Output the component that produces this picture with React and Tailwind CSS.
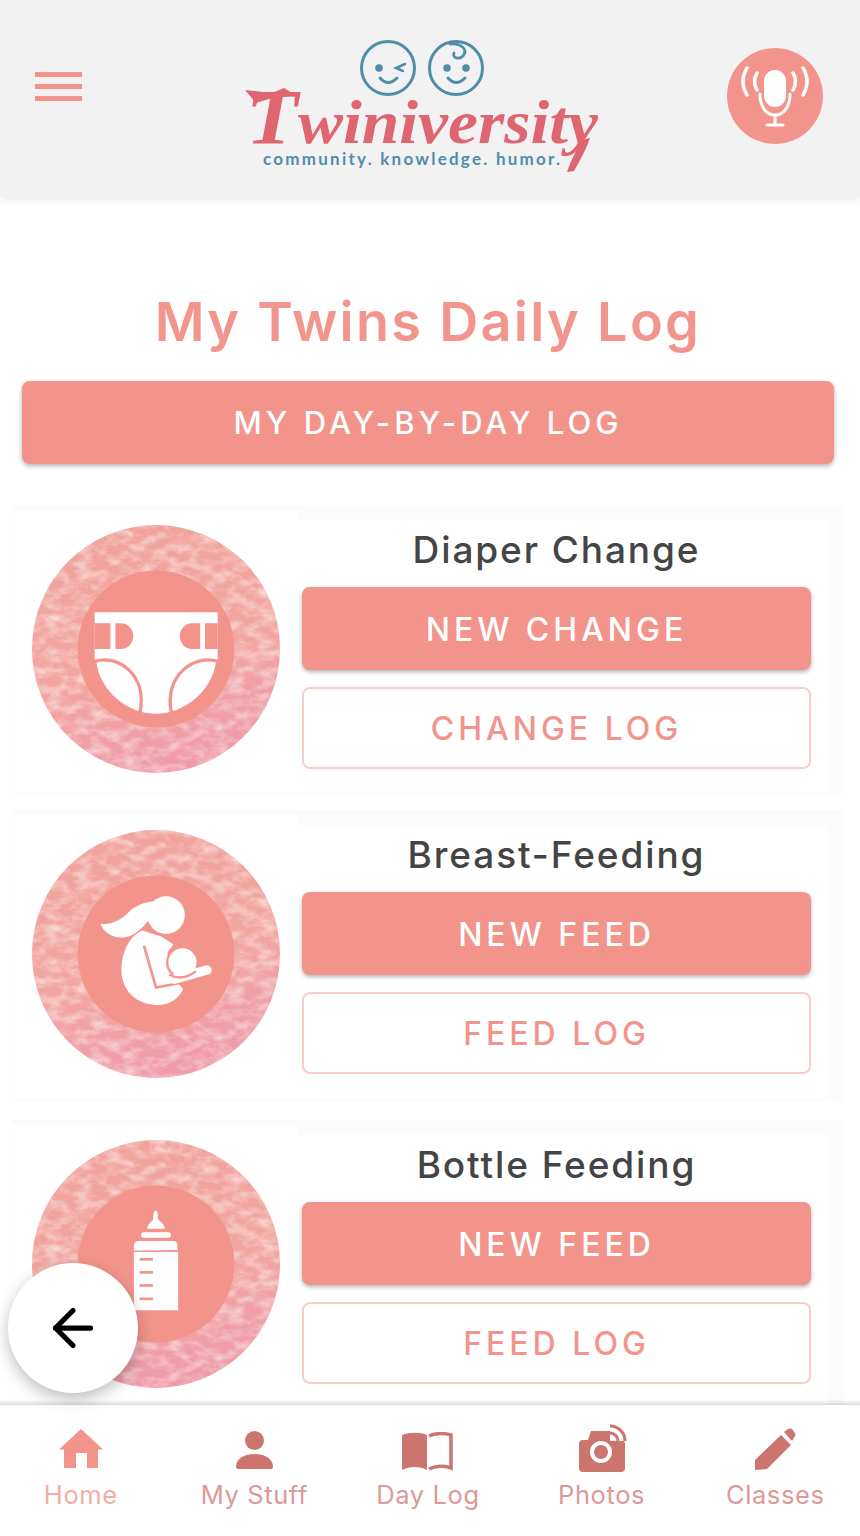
import React from "react";
import { ArrowLeft } from "lucide-react";

const SALMON = "#f2948c";

// watercolour disc with the salmon badge on top, child drawn in zoomed coords (740 wide)
const Badge = ({ id, top, children }) => (
  <svg width="248" height="248" viewBox={`96 ${top} 740 740`} className="block">
    <defs>
      <linearGradient id={`wash-${id}`} x1="0.3" y1="0" x2="0.6" y2="1">
        <stop offset="0" stopColor="#f0a29c" />
        <stop offset="0.55" stopColor="#f2a6a0" />
        <stop offset="1" stopColor="#ee9aa9" />
      </linearGradient>
      <filter id={`noise-${id}`} x="0" y="0" width="100%" height="100%">
        <feTurbulence type="fractalNoise" baseFrequency="0.022 0.038" numOctaves="6" seed="7" />
        <feColorMatrix values="0 0 0 0 1  0 0 0 0 0.93  0 0 0 0 0.92  1.2 0 0 0 -0.46" />
      </filter>
      <clipPath id={`disc-${id}`}>
        <circle cx="466" cy={top + 370} r="370" />
      </clipPath>
    </defs>
    <circle cx="466" cy={top + 370} r="370" fill={`url(#wash-${id})`} />
    <g clipPath={`url(#disc-${id})`}>
      <rect x="96" y={top} width="740" height="740" filter={`url(#noise-${id})`} />
    </g>
    <circle cx="466" cy={top + 370} r="234" fill={SALMON} />
    {children}
  </svg>
);

const DiaperIcon = () => (
  <g>
    <path d="M283 335H650V475L645 485C632 570 552 638 466 638C380 638 300 570 288 485L283 475Z" fill="#fff" />
    <path d="M283 368H330V445H283Z" fill={SALMON} />
    <path d="M345 368H362A36 38.500 0 0 1 362 445H345Z" fill={SALMON} />
    <path d="M612 368H650V445H612Z" fill={SALMON} />
    <path d="M598 368H573A36 38.500 0 0 0 573 445H598Z" fill={SALMON} />
    <path d="M284 482C350 460 442 520 418 636" fill="none" stroke={SALMON} strokeWidth="10" />
    <path d="M649 482C585 460 488 520 512 636" fill="none" stroke={SALMON} strokeWidth="10" />
  </g>
);

const MotherIcon = () => (
  <g>
    <circle cx="496" cy="314" r="56" fill="#fff" />
    <path d="M465 272C425 276 402 288 385 305C365 325 335 346 300 340C310 366 340 386 375 380C405 375 430 350 448 322Z" fill="#fff" />
    <path d="M425 360L482 378L518 402L500 425L510 490L547 535C532 566 505 582 470 582C410 582 363 540 363 480C363 425 385 378 425 360Z" fill="#fff" />
    <path d="M430 405L466 530L640 497" fill="none" stroke={SALMON} strokeWidth="8" />
    <circle cx="545" cy="455" r="49" fill={SALMON} />
    <path d="M520 505L618 478" stroke="#fff" strokeWidth="28" strokeLinecap="round" />
    <circle cx="545" cy="455" r="42" fill="#fff" />
    <path d="M505 492Q545 512 585 482" fill="none" stroke={SALMON} strokeWidth="7" />
  </g>
);

const BottleIcon = () => (
  <g fill="#fff">
    <path d="M458 265C458 250 460 240 465 240C470 240 472 250 472 265C478 275 492 280 492 295H440C440 280 454 275 458 265Z" />
    <rect x="422" y="305" width="88" height="17" rx="6" />
    <path d="M400 360V345Q400 331 414 331H518Q530 331 530 345V358Z" />
    <rect x="400" y="364" width="132" height="174" />
    <g fill={SALMON}>
      <rect x="417" y="382" width="40" height="8" />
      <rect x="417" y="421" width="40" height="8" />
      <rect x="417" y="460" width="40" height="8" />
      <rect x="417" y="500" width="40" height="8" />
    </g>
  </g>
);

const TwiniversityLogo = () => (
  <svg width="380" height="150" viewBox="230 30 380 150" className="block overflow-visible">
    <g fill="none" stroke="#4f8ea8" strokeWidth="3" strokeLinecap="round">
      <circle cx="388" cy="68" r="26.500" />
      <path d="M380 78Q388 87 397 78" />
      <path d="M405 64L396 68L403 71" strokeWidth="2.500" />
      <circle cx="456" cy="68" r="26.500" />
      <path d="M448 78Q456 87 465 78" />
      <path d="M450 44C462 43 468 50 463 56C459 60 452 58 454 53" strokeWidth="2.800" />
    </g>
    <circle cx="379" cy="68" r="3.800" fill="#4f8ea8" />
    <circle cx="447" cy="68" r="3.800" fill="#4f8ea8" />
    <circle cx="466" cy="68" r="3.800" fill="#4f8ea8" />
    <path d="M245 90L272 93L284 88L297 96L272 98L256 103Z" fill="#df6570" />
    <path d="M581 140C576 152 571 160 567 172L574 171C580 160 586 150 590 138Z" fill="#df6570" />
    <text
      x="246"
      y="143"
      textLength="352"
      lengthAdjust="spacingAndGlyphs"
      fill="#df6570"
      fontSize="62"
      fontStyle="italic"
      fontWeight="700"
      fontFamily="'Liberation Serif', serif"
    >
      <tspan fontSize="78">T</tspan>winiversity
    </text>
    <text
      x="263"
      y="165"
      textLength="297"
      fill="#4f8ea8"
      fontSize="17"
      fontWeight="700"
      fontFamily="Lato, sans-serif"
    >
      community. knowledge. humor.
    </text>
  </svg>
);

const MicIcon = () => (
  <svg width="96" height="96" viewBox="0 0 96 96" className="block">
    <circle cx="48" cy="48" r="48" fill={SALMON} />
    <rect x="37" y="22" width="22" height="37" rx="11" fill="#fff" />
    <g fill="none" stroke="#fff" strokeWidth="3" strokeLinecap="round">
      <path d="M33 46C33 60 40 67 48 67C56 67 63 60 63 46" />
      <path d="M48 67V77M40 77H56" />
      <path d="M20 20Q12 33 20 47M30 25Q25 33 30 42M76 20Q84 33 76 47M66 25Q71 33 66 42" strokeWidth="3.500" />
    </g>
  </svg>
);

const HomeIcon = () => (
  <svg width="44" height="40" viewBox="0 0 44 40" className="block">
    <path d="M22 0L44 20.500H39V39H28V24H17V39H5V20.500H0Z" fill="#f2948c" />
  </svg>
);

const PersonIcon = () => (
  <svg width="37" height="38" viewBox="0 0 37 38" className="block">
    <circle cx="18.500" cy="9.500" r="9.500" fill="#cc746e" />
    <path d="M0 36C0 27 9 23 18.500 23C28 23 37 27 37 36Q37 38 35 38H2Q0 38 0 36Z" fill="#cc746e" />
  </svg>
);

const BookIcon = () => (
  <svg width="51" height="39" viewBox="0 0 51 39" className="block">
    <path d="M0 3C8 0 18 0 25 3V38C18 34 8 34 0 38Z" fill="#cc746e" />
    <path d="M27 4C33 1 43 1 49 3V36C43 33 33 34 27 37" fill="none" stroke="#cc746e" strokeWidth="3.500" />
  </svg>
);

const CameraIcon = () => (
  <svg width="46" height="47" viewBox="0 0 46 47" className="block overflow-visible">
    <path d="M4 15H9L12 6H34V15H42Q46 15 46 19V43Q46 47 42 47H4Q0 47 0 43V19Q0 15 4 15Z" fill="#cc746e" />
    <path d="M31 16L31 -3A19 19 0 0 1 50 16Z" fill="#fff" />
    <g fill="none" stroke="#cc746e" strokeWidth="3">
      <path d="M31 8A8 8 0 0 1 39 16M31 1A15 15 0 0 1 46 16" />
    </g>
    <circle cx="22" cy="27" r="9" fill="#cc746e" stroke="#fff" strokeWidth="4" />
  </svg>
);

const PencilIcon = () => (
  <svg width="41" height="43" viewBox="0 0 41 43" className="block">
    <path d="M0 32L26 7L36 17L12 41L0 42Z" fill="#cc746e" />
    <path d="M29 4L33 1Q35 0 37 1L40 5Q41 7 40 8L37 13Z" fill="#cc746e" />
  </svg>
);

const cards = [
  { id: "diaper", title: "Diaper Change", primary: "NEW CHANGE", secondary: "CHANGE LOG", top: 75, icon: <DiaperIcon />, className: "mt-[41px] h-[287px]" },
  { id: "breast", title: "Breast-Feeding", primary: "NEW FEED", secondary: "FEED LOG", top: 60, icon: <MotherIcon />, className: "mt-[18px] h-[288px]" },
  { id: "bottle", title: "Bottle Feeding", primary: "NEW FEED", secondary: "FEED LOG", top: 30, icon: <BottleIcon />, className: "mt-[22px] h-[288px]" },
];

const navItems = [
  { label: "Home", icon: <HomeIcon />, className: "text-[#f4aca6]", iconClass: "" },
  { label: "My Stuff", icon: <PersonIcon />, className: "text-[#dc9a96]", iconClass: "" },
  { label: "Day Log", icon: <BookIcon />, className: "text-[#dc9a96]", iconClass: "translate-y-[2px]" },
  { label: "Photos", icon: <CameraIcon />, className: "text-[#dc9a96]", iconClass: "translate-y-[3px]" },
  { label: "Classes", icon: <PencilIcon />, className: "text-[#dc9a96]", iconClass: "translate-y-[2px]" },
];

const LogCard = ({ card }) => (
  <section className={`ml-[12px] flex w-[831px] shrink-0 bg-[#fbfbfb] shadow-[0_3px_5px_rgba(0,0,0,0.02)] ${card.className}`}>
    <div className="mt-[5px] w-[286px] bg-white pl-[20px] pt-[15px]">
      <Badge id={card.id} top={card.top}>
        {card.icon}
      </Badge>
    </div>
    <div className="mt-[15px] w-[530px] bg-white pl-[4px]">
      <h2 className="flex h-[60px] w-[509px] items-center justify-center text-[37px] font-medium tracking-[1.9px] text-[#444444]">
        {card.title}
      </h2>
      <button className="mt-[7px] flex h-[83px] w-[509px] items-center justify-center rounded-lg bg-[#f2948c] pt-[2px] text-[32px] font-medium tracking-[4px] text-white shadow-[0_2px_4px_rgba(0,0,0,0.3)]">
        {card.primary}
      </button>
      <button className="mt-[17px] flex h-[82px] w-[509px] items-center justify-center rounded-lg border-2 border-[#f8cdc9] bg-white pt-[2px] text-[32px] font-medium tracking-[4px] text-[#f2948c]">
        {card.secondary}
      </button>
    </div>
  </section>
);

const App = () => {
  return (
    <div className="relative flex h-screen w-full flex-col overflow-hidden bg-white font-['Inter',sans-serif]">
      <header className="z-10 flex h-[197px] shrink-0 items-start bg-[#f2f2f3] shadow-[0_3px_8px_rgba(0,0,0,0.08)]">
        <div className="ml-[35px] mt-[72px] flex w-[47px] flex-col gap-[7px]">
          <span className="h-[5px] bg-[#f2948c]"></span>
          <span className="h-[5px] bg-[#f2948c]"></span>
          <span className="h-[5px] bg-[#f2948c]"></span>
        </div>
        <div className="ml-[148px] mt-[30px]">
          <TwiniversityLogo />
        </div>
        <div className="ml-[117px] mt-[48px]">
          <MicIcon />
        </div>
      </header>

      <main className="flex min-h-0 flex-1 flex-col overflow-hidden">
        <h1 className="ml-[-4px] mt-[88px] flex h-[72px] shrink-0 items-center justify-center text-[54px] font-semibold tracking-[2.300px] text-[#f2958c]">
          My Twins Daily Log
        </h1>
        <button className="ml-[22px] mt-[24px] flex h-[83px] w-[812px] shrink-0 items-center justify-center rounded-lg bg-[#f2948c] pt-[2px] text-[31px] font-medium tracking-[4px] text-white shadow-[0_2px_5px_rgba(0,0,0,0.3)]">
          MY DAY-BY-DAY LOG
        </button>
        {cards.map((card) => (
          <LogCard key={card.id} card={card} />
        ))}
      </main>

      <nav className="z-10 ml-[-6px] grid h-[131px] w-[868px] shrink-0 grid-cols-5 bg-white shadow-[0_-2px_4px_rgba(0,0,0,0.18)]">
        {navItems.map((item) => (
          <div key={item.label} className="flex flex-col items-center">
            <div className={`mt-[21px] flex h-[43px] items-end ${item.iconClass}`}>{item.icon}</div>
            <span className={`text-[25.5px] leading-[36px] tracking-[0.6px] ${item.iconClass ? "mt-[8px]" : "mt-[8px]"} ${item.className}`}>{item.label}</span>
          </div>
        ))}
      </nav>

      <button className="absolute left-[8px] top-[1263px] z-20 flex h-[130px] w-[130px] items-center justify-center rounded-full bg-white text-black shadow-[0_6px_16px_rgba(0,0,0,0.25)]">
        <ArrowLeft size={60} strokeWidth={2.1} />
      </button>
    </div>
  );
};

export default App;
